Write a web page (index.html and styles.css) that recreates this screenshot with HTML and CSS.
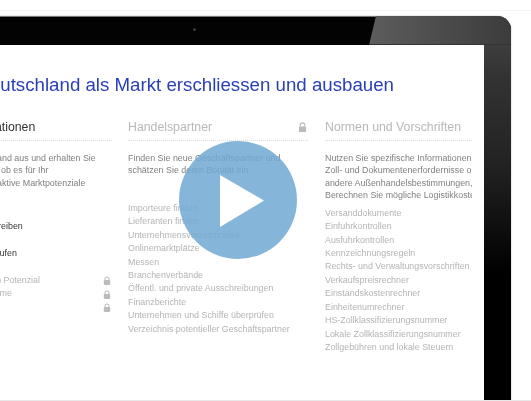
FILE: index.html
```html
<!DOCTYPE html>
<html lang="de">
<head>
<meta charset="utf-8">
<title>Deutschland als Markt</title>
<link rel="stylesheet" href="styles.css">
</head>
<body>
<div class="stage">
  <div class="device">
    <div class="bezel-top"><span class="camera"></span></div>
    <div class="screen">
      <h1 class="title">Deutschland als Markt erschliessen und ausbauen</h1>
      <div class="columns">
        <section class="col col-first">
          <h2 class="col-head active">Marktinformationen</h2>
          <p class="intro">Wählen Sie ein Land aus und erhalten Sie<br>Wirtschaftsdaten, ob es für Ihr<br>Handelsprofil attraktive Marktpotenziale</p>
          <ul class="list list-first">
            <li class="strong">Länderprofile schreiben</li>
            <li class="blank"></li>
            <li class="strong">Marktanalysen kaufen</li>
            <li class="blank"></li>
            <li>Märkte mit hohem Potenzial<svg class="lock" viewBox="0 0 10 11"><use href="#lock"/></svg></li>
            <li>Auslandsprogramme<svg class="lock" viewBox="0 0 10 11"><use href="#lock"/></svg></li>
            <li><svg class="lock" viewBox="0 0 10 11"><use href="#lock"/></svg></li>
          </ul>
        </section>
        <section class="col col-second">
          <h2 class="col-head">Handelspartner<svg class="lock lock-head" viewBox="0 0 10 11"><use href="#lock"/></svg></h2>
          <p class="intro">Finden Sie neue Geschäftspartner und<br>schätzen Sie deren Bonität ein.</p>
          <ul class="list list-second">
            <li>Importeure finden</li>
            <li>Lieferanten finden</li>
            <li>Unternehmensverzeichnisse</li>
            <li>Onlinemarktplätze</li>
            <li>Messen</li>
            <li>Branchenverbände</li>
            <li>Öffentl. und private Ausschreibungen</li>
            <li>Finanzberichte</li>
            <li>Unternehmen und Schiffe überprüfen</li>
            <li>Verzeichnis potentieller Geschäftspartner</li>
          </ul>
        </section>
        <section class="col col-third">
          <h2 class="col-head">Normen und Vorschriften</h2>
          <p class="intro">Nutzen Sie spezifische Informationen<br>Zoll- und Dokumentenerfordernisse oder<br>andere Außenhandelsbestimmungen,<br>Berechnen Sie mögliche Logistikkosten</p>
          <ul class="list list-third">
            <li>Versanddokumente</li>
            <li>Einfuhrkontrollen</li>
            <li>Ausfuhrkontrollen</li>
            <li>Kennzeichnungsregeln</li>
            <li>Rechts- und Verwaltungsvorschriften</li>
            <li>Verkaufspreisrechner</li>
            <li>Einstandskostenrechner</li>
            <li>Einheitenumrechner</li>
            <li>HS-Zollklassifizierungsnummer</li>
            <li>Lokale Zollklassifizierungsnummer</li>
            <li>Zollgebühren und lokale Steuern</li>
          </ul>
        </section>
      </div>
    </div>
    <div class="gloss-top"></div>
    <div class="gloss-side"></div>
  </div>
  <div class="play"><svg class="play-tri" viewBox="0 0 46 54"><path d="M0 0L45 26L0 53Z"/></svg></div>
</div>
<svg class="defs" width="0" height="0"><defs><g id="lock"><path d="M2.5 5V3.5a2.5 2.5 0 0 1 5 0V5" fill="none" stroke="currentColor" stroke-width="1.3"/><rect x="1" y="5" width="8" height="6" rx="1" fill="currentColor"/></g></defs></svg>
</body>
</html>
```
FILE: styles.css
```css
html, body { margin: 0; padding: 0; background: #fff; }
.stage {
  position: relative;
  width: 531px;
  height: 401px;
  overflow: hidden;
  box-sizing: border-box;
  border-bottom: 1px solid #e8e8e8;
  padding-top: 16px;
  font-family: "Liberation Sans", Arial, sans-serif;
}
.stage::before {
  content: "";
  position: absolute; left: 0; right: 0; top: 10px;
  border-top: 1px solid #f5f5f5;
}
.device {
  position: relative;
  margin-left: -70px;
  width: 581px;
  height: 400px;
  background: #030303;
  border-radius: 0 14px 0 0;
  box-shadow: 0 0 2px rgba(0,0,0,.3);
  overflow: hidden;
  filter: blur(.6px);
}
.bezel-top { height: 29px; position: relative; border-top: 1px solid #777; box-sizing: border-box; }
.camera {
  position: absolute; left: 263px; top: 11px;
  width: 3px; height: 3px; border-radius: 50%; background: #3a3a3a;
}
.screen {
  width: 554px;
  height: 371px;
  background: #fff;
  overflow: hidden;
  position: relative;
  z-index: 2;
}
.gloss-top {
  position: absolute; left: 0; top: 0; right: 0; height: 29px;
  background: linear-gradient(90deg, #5c5c5c 76%, #3c3c3c 100%);
  clip-path: polygon(446px 0, 100% 0, 100% 100%, 439px 100%);
  border-bottom: 1px solid #333;
  box-sizing: border-box;
}
.gloss-side {
  position: absolute; left: 554px; top: 29px; right: 0; bottom: 0;
  background: linear-gradient(180deg, #3e3e3e 0, #333 30px, #222 120px, #0c0c0c 190px, #000 230px);
}
.title {
  margin: 0 0 0 46.4px;
  padding: 29px 0 0 0;
  font-size: 18.7px;
  line-height: 22px;
  font-weight: normal;
  color: #2a3fb5;
  white-space: nowrap;
}
.columns { display: flex; margin-top: 24px; }
.col { flex: none; }
.col-first { width: 182px; margin-right: 16px; }
.col-second { width: 180px; margin-right: 17px; }
.col-third { width: 147px; overflow: hidden; }
.col-head {
  position: relative;
  margin: 0;
  height: 20px;
  font-size: 12.3px;
  line-height: 15px;
  font-weight: normal;
  color: #b8b8b8;
  white-space: nowrap;
  border-bottom: 1px dotted #dcdcdc;
}
.col-head.active { color: #333; }
.intro {
  margin: 11px 0 0 0;
  font-size: 8.9px;
  line-height: 12.4px;
  color: #808080;
  white-space: nowrap;
}
.list { list-style: none; margin: 0; padding: 0; font-size: 8.9px; line-height: 13.45px; color: #b4b4b4; white-space: nowrap; }
.list li { height: 13.45px; display: flex; justify-content: space-between; align-items: center; }
.list-first { margin-top: 31px; }
.list-first li.strong { color: #333; }
.list-second { margin-top: 25px; }
.list-third { margin-top: 5px; }
.lock { width: 8px; height: 9px; color: #bbb; flex: none; margin-left: auto; margin-right: 1px; }
.lock-head { position: absolute; right: 1px; top: 2px; width: 9px; height: 10px; margin: 0; }
.play {
  position: absolute; left: 179px; top: 141px;
  width: 118px; height: 118px; border-radius: 50%;
  background: rgba(112,169,211,.85);
  filter: blur(.3px);
}
.play-tri { position: absolute; left: 41px; top: 34px; width: 45px; height: 53px; fill: #fff; }
.defs { position: absolute; }
```
